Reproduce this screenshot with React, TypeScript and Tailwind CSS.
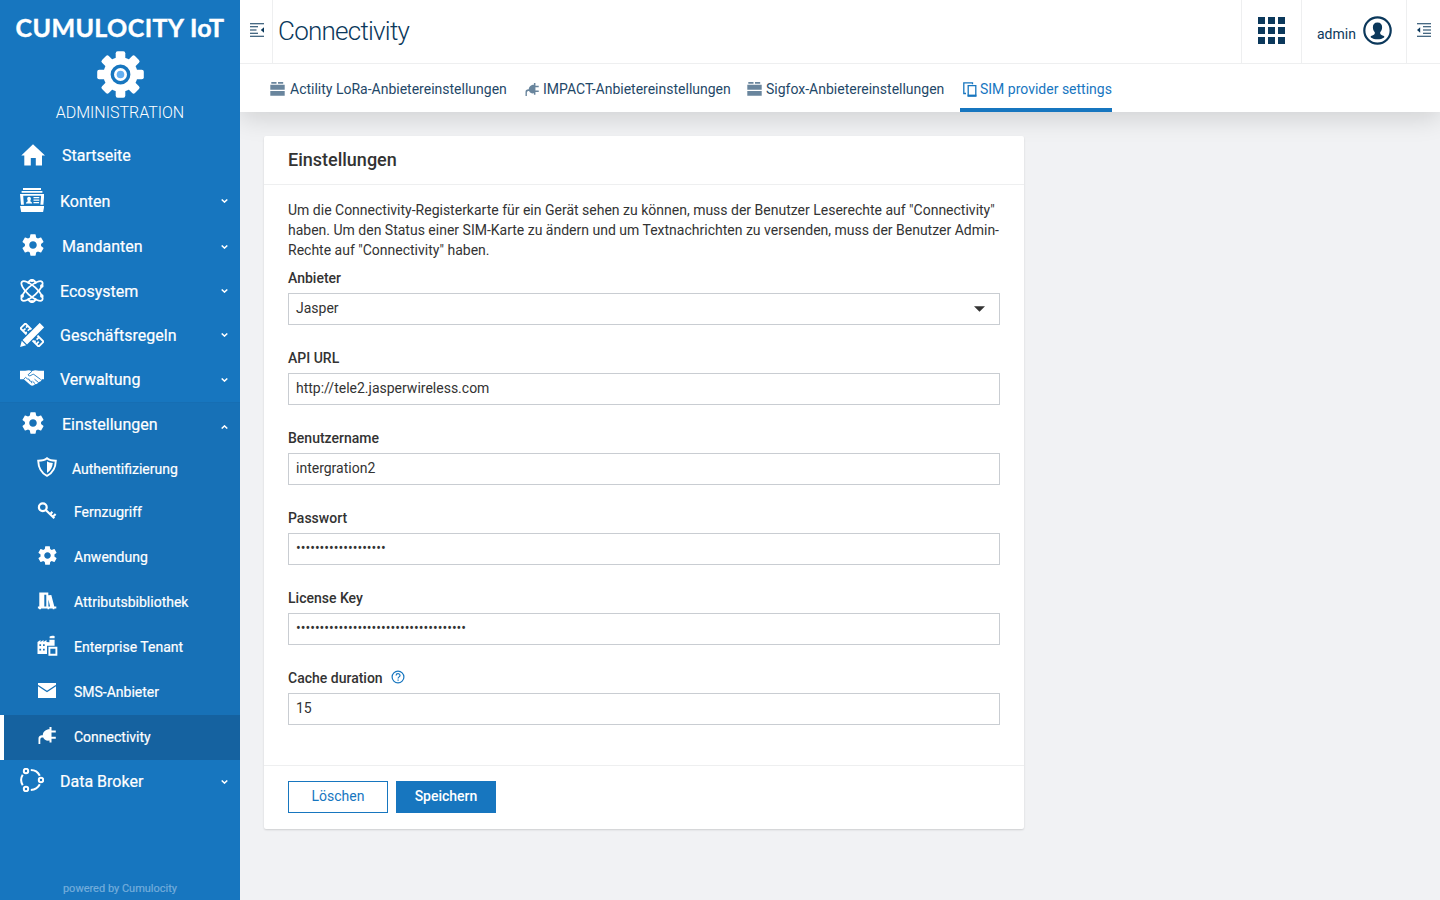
import React from "react";

type SvgProps = { className?: string };

const GEAR =
  "M19.43 12.98c.04-.32.07-.64.07-.98s-.03-.66-.07-.98l2.11-1.65c.19-.15.24-.42.12-.64l-2-3.46c-.12-.22-.39-.3-.61-.22l-2.49 1c-.52-.4-1.08-.73-1.69-.98l-.38-2.65C14.46 2.18 14.25 2 14 2h-4c-.25 0-.46.18-.49.42l-.38 2.65c-.61.25-1.17.59-1.69.98l-2.49-1c-.23-.09-.49 0-.61.22l-2 3.46c-.13.22-.07.49.12.64l2.11 1.65c-.04.32-.07.65-.07.98s.03.66.07.98l-2.11 1.65c-.19.15-.24.42-.12.64l2 3.46c.12.22.39.3.61.22l2.49-1c.52.4 1.08.73 1.69.98l.38 2.65c.03.24.24.42.49.42h4c.25 0 .46-.18.49-.42l.38-2.65c.61-.25 1.17-.59 1.69-.98l2.49 1c.23.09.49 0 .61-.22l2-3.46c.12-.22.07-.49-.12-.64l-2.11-1.65zM12 15.5c-1.93 0-3.5-1.57-3.5-3.5s1.57-3.5 3.5-3.5 3.5 1.57 3.5 3.5-1.57 3.5-3.5 3.5z";

const Gear = ({ className }: SvgProps) => (
  <svg className={className} viewBox="1.8 1.8 20.4 20.4" fill="currentColor"><path d={GEAR} /></svg>
);

const LogoGear = () => (
  <svg className="h-[47px] w-[47px]" viewBox="-23.5 -23.5 47 47">
    <g fill="#fff">
      <circle r="17.2" />
      {[0, 45, 90, 135].map((a) => (
        <rect key={a} x="-4.8" y="-23.3" width="9.6" height="46.6" rx="2" transform={`rotate(${a})`} />
      ))}
    </g>
    <circle r="8.2" fill="#fff" stroke="#1776bf" strokeWidth="3.4" />
    <circle r="3.8" fill="#64b0f2" />
  </svg>
);

const Home = ({ className }: SvgProps) => (
  <svg className={className} viewBox="0 0 24 22" fill="currentColor">
    <path d="M12 .3 24 11.6h-3V21.6h-6.200V14H9.800v7.600H3.300v-10H.3z" />
  </svg>
);

const Accounts = ({ className }: SvgProps) => (
  <svg className={className} viewBox="0 0 24 24" fill="currentColor">
    <path d="M3 0h18v1.900H3zM1.600 3h20.800v1.800H1.600zM0 18h24.300l-1.200 6H1.200z" />
    <path fillRule="evenodd" d="M0 6h24.300l-.9 10.800H1L0 6zm3.200 1.700.7 9.100h16.500l.7-9.100z" />
    <path d="M9 8.800c1.400 0 2 .9 1.900 2.300-.1 1-.5 1.700-.7 2 .3.900 1.900.8 2 2.400H5.900c.1-1.600 1.700-1.500 2-2.400-.3-.4-.7-1.100-.7-2C7.100 9.700 7.600 8.800 9 8.800zM13.500 9h5.800v1.300h-5.800zM13.500 11.500h5.800v1.200h-5.800zM13.500 14h5.600v1.200h-5.600z" />
  </svg>
);

const Atom = ({ className }: SvgProps) => (
  <svg className={className} viewBox="-12 -12 24 24" fill="none" stroke="currentColor" strokeWidth="1.800">
    <ellipse rx="13.600" ry="4.800" transform="rotate(42)" />
    <ellipse rx="13.600" ry="4.800" transform="rotate(-42)" />
    <path d="M-4.200-7.500C-3-10 -1.500-11 0-11S3-10 4.200-7.500M-4.200 7.500C-3 10-1.500 11 0 11S3 10 4.200 7.500" />
    <g fill="currentColor" stroke="none">
      <circle cx="9.800" cy="-5" r="1.800" /><circle cx="-9.800" cy="5" r="1.800" /><circle cx="9.800" cy="5" r="1.800" />
      <circle cy="-10.500" r="1.600" /><circle cy="10.500" r="1.600" />
    </g>
  </svg>
);

const Tools = ({ className }: SvgProps) => (
  <svg className={className} viewBox="-12 -12 24 24">
    <g transform="rotate(45)">
      <rect x="-12.900" y="-3.500" width="25.800" height="7" fill="none" stroke="#fff" strokeWidth="1.900" />
      <path d="M-9.500-1v-2.500M-9.200 0v3.500M-6 0v-3.500M6.500 0v-3.500M9.500 0v3.500M6.500 1.500v2M-6 1.500v2" stroke="#fff" strokeWidth="1.700" />
    </g>
    <g transform="rotate(-45)">
      <path d="M-11.500-4.300H15v8.600h-26.500z" fill="#1776bf" />
      <path d="M-10.200-3.100H14v6.200h-24.200zM-11.400-3.100v6.200l-5.400-3.100z" fill="#fff" />
    </g>
  </svg>
);

const Handshake = ({ className }: SvgProps) => (
  <svg className={className} viewBox="0 0 24 16">
    <path fill="#fff" d="M0 .8h5.200L9 .3l3 .6 3.200-.7 3.600.6H24v8.400h-2.200c-.3 1.600-1.500 2.600-3.200 2.900-.8 1.500-2 2.200-3.400 2-1.400 1.600-3.200 2-4.800 1L3.800 9.200H0z" />
    <path fill="none" stroke="#1776bf" strokeWidth=".9" d="M12 1.200 8 4.800c.5 1.500 2.500 1.300 4.200-.2l1.500-.3 7 5.200M3.600 9.300l2-1.900 1.800 1.500 1.700.3.500 1.700 1.900.5.300 1.800M12.500 11.200l2.500 2.400M14.500 9.200l3.600 3" />
  </svg>
);

const Broker = ({ className }: SvgProps) => (
  <svg className={className} viewBox="0 0 24 24" fill="none" stroke="currentColor" strokeWidth="2">
    <circle cx="6" cy="3" r="2.200" /><circle cx="21" cy="12" r="2.200" /><circle cx="6" cy="21" r="2.200" />
    <path d="M10.800 2.100c4 .1 7.300 2.200 9 5.600M19.800 16.300c-1.700 3.400-5 5.500-9 5.600M2.700 6.800a10 10 0 0 0 0 10.400" />
  </svg>
);

const Shield = ({ className }: SvgProps) => (
  <svg className={className} viewBox="0 0 20 20" fill="none" stroke="currentColor" strokeWidth="1.900">
    <path d="M10 1.200C8 3 4.500 3.700 1.200 3.700c.2 6.800 2.600 12 8.800 15.100 6.200-3.100 8.600-8.300 8.800-15.100C15.500 3.700 12 3 10 1.200z" />
    <path d="M10 4.300c1.500 1 3.500 1.600 5.800 1.800-.4 4.300-2.100 7.600-5.800 9.800z" fill="currentColor" stroke="none" />
  </svg>
);

const Key = ({ className }: SvgProps) => (
  <svg className={className} viewBox="0 0 20 18" fill="none" stroke="currentColor" strokeWidth="2.200">
    <circle cx="5.800" cy="5.300" r="3.900" />
    <path d="m9 8.300 8.300 8M12.800 12.500l2.600-2.600M15.600 15l3-3" />
  </svg>
);

const Books = ({ className }: SvgProps) => (
  <svg className={className} viewBox="0 0 20 18" fill="currentColor">
    <path fillRule="evenodd" d="M2.300.5h9v2.800l3-.4 3 11.600h2v2h-1.900v.7h-1.700v-.7h-3.500v.7h-1.700v-.7H4v.7H2v-.7H.900v-2h1.400zM7.300 2.700v11.700h2V2.700zM11.400 7.500v7h1.700z" />
  </svg>
);

const Factory = ({ className }: SvgProps) => (
  <svg className={className} viewBox="0 0 21 21">
    <path fill="currentColor" d="M.5 7 3.500 5v2l3-2v2l3-2v2l2.900.3V4.800h5.200v6H10v8.200H.500zM12.600 3.300V1.400c1.600-.9 3.300-.7 5-.4v2.300z" />
    <path fill="#1771b7" d="M2.400 9.200h1.700v1.900H2.400zM6 9.200h1.700v1.900H6zM2.400 13.700h1.700v1.900H2.400zM6 13.700h1.700v1.900H6z" />
    <path fill="none" stroke="currentColor" strokeWidth="1.900" d="M12.400 12.800h7v7h-7z" />
  </svg>
);

const Mail = ({ className }: SvgProps) => (
  <svg className={className} viewBox="0 0 18 15">
    <path fill="currentColor" d="M0 0h18v15H0z" />
    <path d="M0 2.500 9 8.500l9-6" fill="none" stroke="#1771b7" strokeWidth="1.300" />
  </svg>
);

const Plug = ({ className }: SvgProps) => (
  <svg className={className} viewBox="0 0 18 17" fill="currentColor">
    <path d="M11.500 0h2v3.500h4.300v2h-4.300v4.200h4.300v2h-4.300v3.800h-2v-2C8.600 14 6 13 5.200 10.500 3 10.500 2.300 11 2.300 13v4H.500v-5C.5 9.500 1.500 8.500 4.800 8.300 4.800 4.500 8 2.200 11.500 2.200z" />
  </svg>
);

const Modules = ({ className }: SvgProps) => (
  <svg className={className} viewBox="0 0 15 14" fill="currentColor">
    <path d="M1.300 0h5.200v1.800H1.300zM8 0h5.200v1.800H8zM.3 2.800h14.400v5H.3zM.3 8.900h14.400v4.900H.3z" />
  </svg>
);

const Sim = ({ className }: SvgProps) => (
  <svg className={className} viewBox="0 0 14 15" fill="none" stroke="currentColor">
    <path d="M3 11.500H.8V.8h8.700v1.500" strokeWidth="1.300" />
    <path d="M5.200 3.700h7.600v10.500H5.200z" strokeWidth="1.300" />
    <path d="M4.600 13.500h8.800" strokeWidth="1.800" />
  </svg>
);

const Collapse = ({ className }: SvgProps) => (
  <svg className={className} viewBox="0 0 14 14" stroke="currentColor" strokeWidth="1.100">
    <path d="M0 .7h14M0 3.800h8M0 7h6.500M0 10.200h8M0 13.300h14" />
    <path d="m14 4.300-3.200 2.700L14 9.700z" fill="currentColor" stroke="none" />
  </svg>
);

const Indent = ({ className }: SvgProps) => (
  <svg className={className} viewBox="0 0 14 14" stroke="currentColor" strokeWidth="1.100">
    <path d="M0 .7h14M6 3.800h8M6 7h8M6 10.200h8M0 13.300h14" />
    <path d="M3.200 4.300 0 7l3.200 2.700z" fill="currentColor" stroke="none" />
  </svg>
);

const Chevron = ({ up }: { up?: boolean }) => (
  <svg className={up ? "mt-[3px] h-1 w-[7px] rotate-180" : "h-1 w-[7px]"} viewBox="0 0 7 4" fill="none" stroke="#fff" strokeWidth="1.500">
    <path d="m.7.5 2.800 2.600L6.300.5" />
  </svg>
);

type NavProps = { h: string; icon: React.ReactNode; label: string; pad?: string; text?: string; arrow?: "down" | "up" };

const NavRow = ({ h, icon, label, pad = "pr-4 pl-[20px]", text = "", arrow }: NavProps) => (
  <div className={`flex shrink-0 items-center pr-[12px] ${h}`}>
    <div className={`flex shrink-0 items-center ${pad}`}>{icon}</div>
    <span className={`whitespace-nowrap text-[16px] leading-5 [-webkit-text-stroke:0.2px_white] ${text}`}>{label}</span>
    {arrow && <span className="ml-auto"><Chevron up={arrow === "up"} /></span>}
  </div>
);

type SubProps = { h: string; icon: React.ReactNode; label: string; text?: string; on?: boolean };

const SubRow = ({ h, icon, label, text = "pl-[74px]", on }: SubProps) => (
  <div className={`relative flex shrink-0 items-center ${h} ${on ? "bg-[#1562a0]" : ""}`}>
    {on && <span className="absolute inset-y-0 left-0 w-1 bg-white" />}
    <span className="absolute left-[36px] flex w-[22px] justify-center">{icon}</span>
    <span className={`-mt-[2px] whitespace-nowrap text-[14px] leading-5 [-webkit-text-stroke:0.2px_white] ${text}`}>{label}</span>
  </div>
);

const Field = ({ label, help, children }: { label: string; help?: boolean; children: React.ReactNode }) => (
  <div className="flex h-20 flex-col">
    <div className="flex h-[25px] items-start text-[14px] font-medium leading-5">
      {label}
      {help && (
        <svg className="ml-2 mt-[2px] h-[14px] w-[14px]" viewBox="0 0 14 14" fill="none" stroke="#1776bf" strokeWidth="1.200">
          <circle cx="7" cy="7" r="5.900" />
          <path d="M5.100 5.500c0-2.400 3.900-2.400 3.900-.1 0 1.400-1.900 1.500-1.900 3M7.100 9.500v1.200" />
        </svg>
      )}
    </div>
    <div className="flex h-8 items-center border border-[#c9cdd2] px-[7px] pb-[2px] text-[14px] leading-5">{children}</div>
  </div>
);

export default function App() {
  return (
    <div className="flex h-[900px] w-[1440px] overflow-hidden bg-[#f1f2f4] font-['Roboto',sans-serif] text-[#333]">
      <aside className="relative z-10 flex w-60 shrink-0 flex-col bg-[#1776bf] text-white">
        <div className="flex h-[133px] shrink-0 flex-col items-center">
          <div className="mt-[11px] whitespace-nowrap font-['Lato',sans-serif] text-[25px] font-bold leading-8 tracking-[0.4px] [-webkit-text-stroke:0.4px_white]">CUMULOCITY IoT</div>
          <div className="mt-[8px] flex h-[47px]"><LogoGear /></div>
          <div className="mt-[5px] text-[16px] font-light leading-5">ADMINISTRATION</div>
        </div>
        <NavRow h="h-[45px]" pad="pl-[21px] pr-[17px]" icon={<Home className="-mt-[2px] h-[22px] w-6" />} label="Startseite" />
        <NavRow h="h-[46px]" icon={<Accounts className="-mt-[2px] h-6 w-6" />} label="Konten" text="mt-[2px]" arrow="down" />
        <NavRow h="h-[45px]" pad="pl-[22px] pr-[18px]" icon={<Gear className="-mt-[3px] h-[22px] w-[22px]" />} label="Mandanten" arrow="down" />
        <NavRow h="h-[44px]" icon={<Atom className="h-6 w-6" />} label="Ecosystem" text="mt-[2px]" arrow="down" />
        <NavRow h="h-[44px]" icon={<Tools className="h-6 w-6" />} label="Geschäftsregeln" text="mt-[2px]" arrow="down" />
        <NavRow h="h-[45px]" icon={<Handshake className="-mt-[3px] h-4 w-6" />} label="Verwaltung" arrow="down" />
        <div className="flex shrink-0 flex-col border-t border-[#166eb3] bg-[#1771b7]">
          <NavRow h="h-[44px]" pad="pl-[22px] pr-[18px]" icon={<Gear className="-mt-[4px] h-[22px] w-[22px]" />} label="Einstellungen" arrow="up" />
          <SubRow h="h-[45px]" text="pl-[72px]" icon={<Shield className="-mt-[5px] h-5 w-5" />} label="Authentifizierung" />
          <SubRow h="h-[43px]" text="pl-[74px] -translate-y-px" icon={<Key className="-mt-[6px] h-[18px] w-5" />} label="Fernzugriff" />
          <SubRow h="h-[45px]" icon={<Gear className="-mt-[4px] h-[19px] w-[19px]" />} label="Anwendung" />
          <SubRow h="h-[45px]" icon={<Books className="-mt-[4px] h-[18px] w-5" />} label="Attributsbibliothek" />
          <SubRow h="h-[45px]" icon={<Factory className="-mt-[4px] h-[21px] w-[21px]" />} label="Enterprise Tenant" />
          <SubRow h="h-[45px]" icon={<Mail className="-mt-[4px] h-[15px] w-[18px]" />} label="SMS-Anbieter" />
          <SubRow h="h-[45px]" on icon={<Plug className="-mt-[4px] h-[17px] w-[18px]" />} label="Connectivity" />
        </div>
        <NavRow h="h-[44px]" icon={<Broker className="-mt-[4px] h-6 w-6" />} label="Data Broker" arrow="down" />
        <div className="mt-auto mb-[3px] text-center text-[11px] leading-4 text-[#74addb] [-webkit-text-stroke:0.2px_#74addb]">powered by Cumulocity</div>
      </aside>

      <main className="flex min-w-0 flex-1 flex-col">
        <div className="relative shrink-0 bg-white text-[#0b385b] shadow-[0_6px_24px_rgba(0,0,0,0.14)]">
          <header className="flex h-16 border-b border-[#eeeff0]">
            <div className="flex w-[33px] items-center justify-center border-r border-[#eeeff0]"><Collapse className="-mt-[4px] ml-[2px] h-[14px] w-[14px]" /></div>
            <h1 className="ml-[5px] text-[26px] font-light leading-[62px] tracking-[-0.75px]">Connectivity</h1>
            <div className="ml-auto flex w-[61px] items-center justify-center border-x border-[#eeeff0]">
              <div className="-mt-[3px] grid grid-cols-3 gap-[3px]">
                {Array.from({ length: 9 }, (_, i) => <span key={i} className="h-[7px] w-[7px] bg-[#0b385b]" />)}
              </div>
            </div>
            <div className="flex w-[105px] items-center border-r border-[#eeeff0] pl-[15px]">
              <span className="mt-[5px] text-[14px] leading-5">admin</span>
              <svg className="-mt-[2px] ml-[7px] h-[29px] w-[29px]" viewBox="0 0 29 29">
                <circle cx="14.500" cy="14.500" r="13.200" fill="none" stroke="#0b385b" strokeWidth="2.200" />
                <path fill="#0b385b" d="M14.500 6.500c3.200 0 4.800 2 4.600 5-.1 2-.8 3.500-1.900 4.700-.4 2.200.7 2.600 3.700 3.800.5.300.5 1 .2 1.400-3.600 2.600-9.600 2.600-13.200 0-.3-.4-.3-1.100.2-1.400 3-1.200 4.100-1.600 3.700-3.800-1.100-1.200-1.800-2.700-1.900-4.700-.2-3 1.400-5 4.600-5z" />
              </svg>
            </div>
            <div className="flex w-[33px] items-center justify-center"><Indent className="-mt-[4px] h-[14px] w-[14px]" /></div>
          </header>
          <nav className="flex h-12 pl-[30px] text-[14px] leading-5 text-[#1f4868]">
            <div className="flex w-[255px] items-center"><Modules className="mt-[2px] mr-[5px] h-[14px] w-[15px] text-[#69859d]" /><span className="mt-[2px] whitespace-nowrap">Actility LoRa-Anbietereinstellungen</span></div>
            <div className="flex w-[222px] items-center"><Plug className="mt-[2px] mr-[4px] h-[13px] w-[14px] text-[#69859d]" /><span className="mt-[2px] whitespace-nowrap">IMPACT-Anbietereinstellungen</span></div>
            <div className="flex w-[213px] items-center"><Modules className="mt-[2px] mr-[4px] h-[14px] w-[15px] text-[#69859d]" /><span className="mt-[2px] whitespace-nowrap">Sigfox-Anbietereinstellungen</span></div>
            <div className="flex w-[152px] items-center border-b-4 border-[#1776bf] pl-[3px] pt-[4px] text-[#1776bf]"><Sim className="mt-[2px] mr-[3px] h-[15px] w-[14px]" /><span className="mt-[2px] whitespace-nowrap">SIM provider settings</span></div>
          </nav>
        </div>

        <section className="relative ml-6 mt-6 flex h-[693px] w-[760px] flex-col rounded-[2px] bg-white shadow-[0_1px_2px_rgba(0,0,0,0.15)]">
          <h2 className="h-[49px] border-b border-[#eeeff0] pl-6 text-[18px] font-medium leading-[48px]">Einstellungen</h2>
          <div className="flex h-[581px] flex-col border-b border-[#eeeff0] px-6 pt-[15px]">
            <p className="h-[68px] whitespace-nowrap text-[14px] leading-5">
              Um die Connectivity-Registerkarte für ein Gerät sehen zu können, muss der Benutzer Leserechte auf "Connectivity"<br />
              haben. Um den Status einer SIM-Karte zu ändern und um Textnachrichten zu versenden, muss der Benutzer Admin-<br />
              Rechte auf "Connectivity" haben.
            </p>
            <Field label="Anbieter">
              Jasper
              <svg className="ml-auto mr-[7px] mt-[1px] h-[6px] w-[11px]" viewBox="0 0 11 6"><path d="M0 .3h11L5.500 5.800z" fill="#333" /></svg>
            </Field>
            <Field label="API URL">http://tele2.jasperwireless.com</Field>
            <Field label="Benutzername">intergration2</Field>
            <Field label="Passwort">{"•".repeat(19)}</Field>
            <Field label="License Key">{"•".repeat(36)}</Field>
            <Field label="Cache duration" help>15</Field>
          </div>
          <div className="flex gap-2 px-6 pt-[15px] text-[14px]">
            <button className="h-8 w-[100px] border border-[#1776bf] pb-[2px] text-[#1776bf]">Löschen</button>
            <button className="h-8 w-[100px] bg-[#1776bf] pb-[2px] font-medium text-white">Speichern</button>
          </div>
        </section>
      </main>
    </div>
  );
}
